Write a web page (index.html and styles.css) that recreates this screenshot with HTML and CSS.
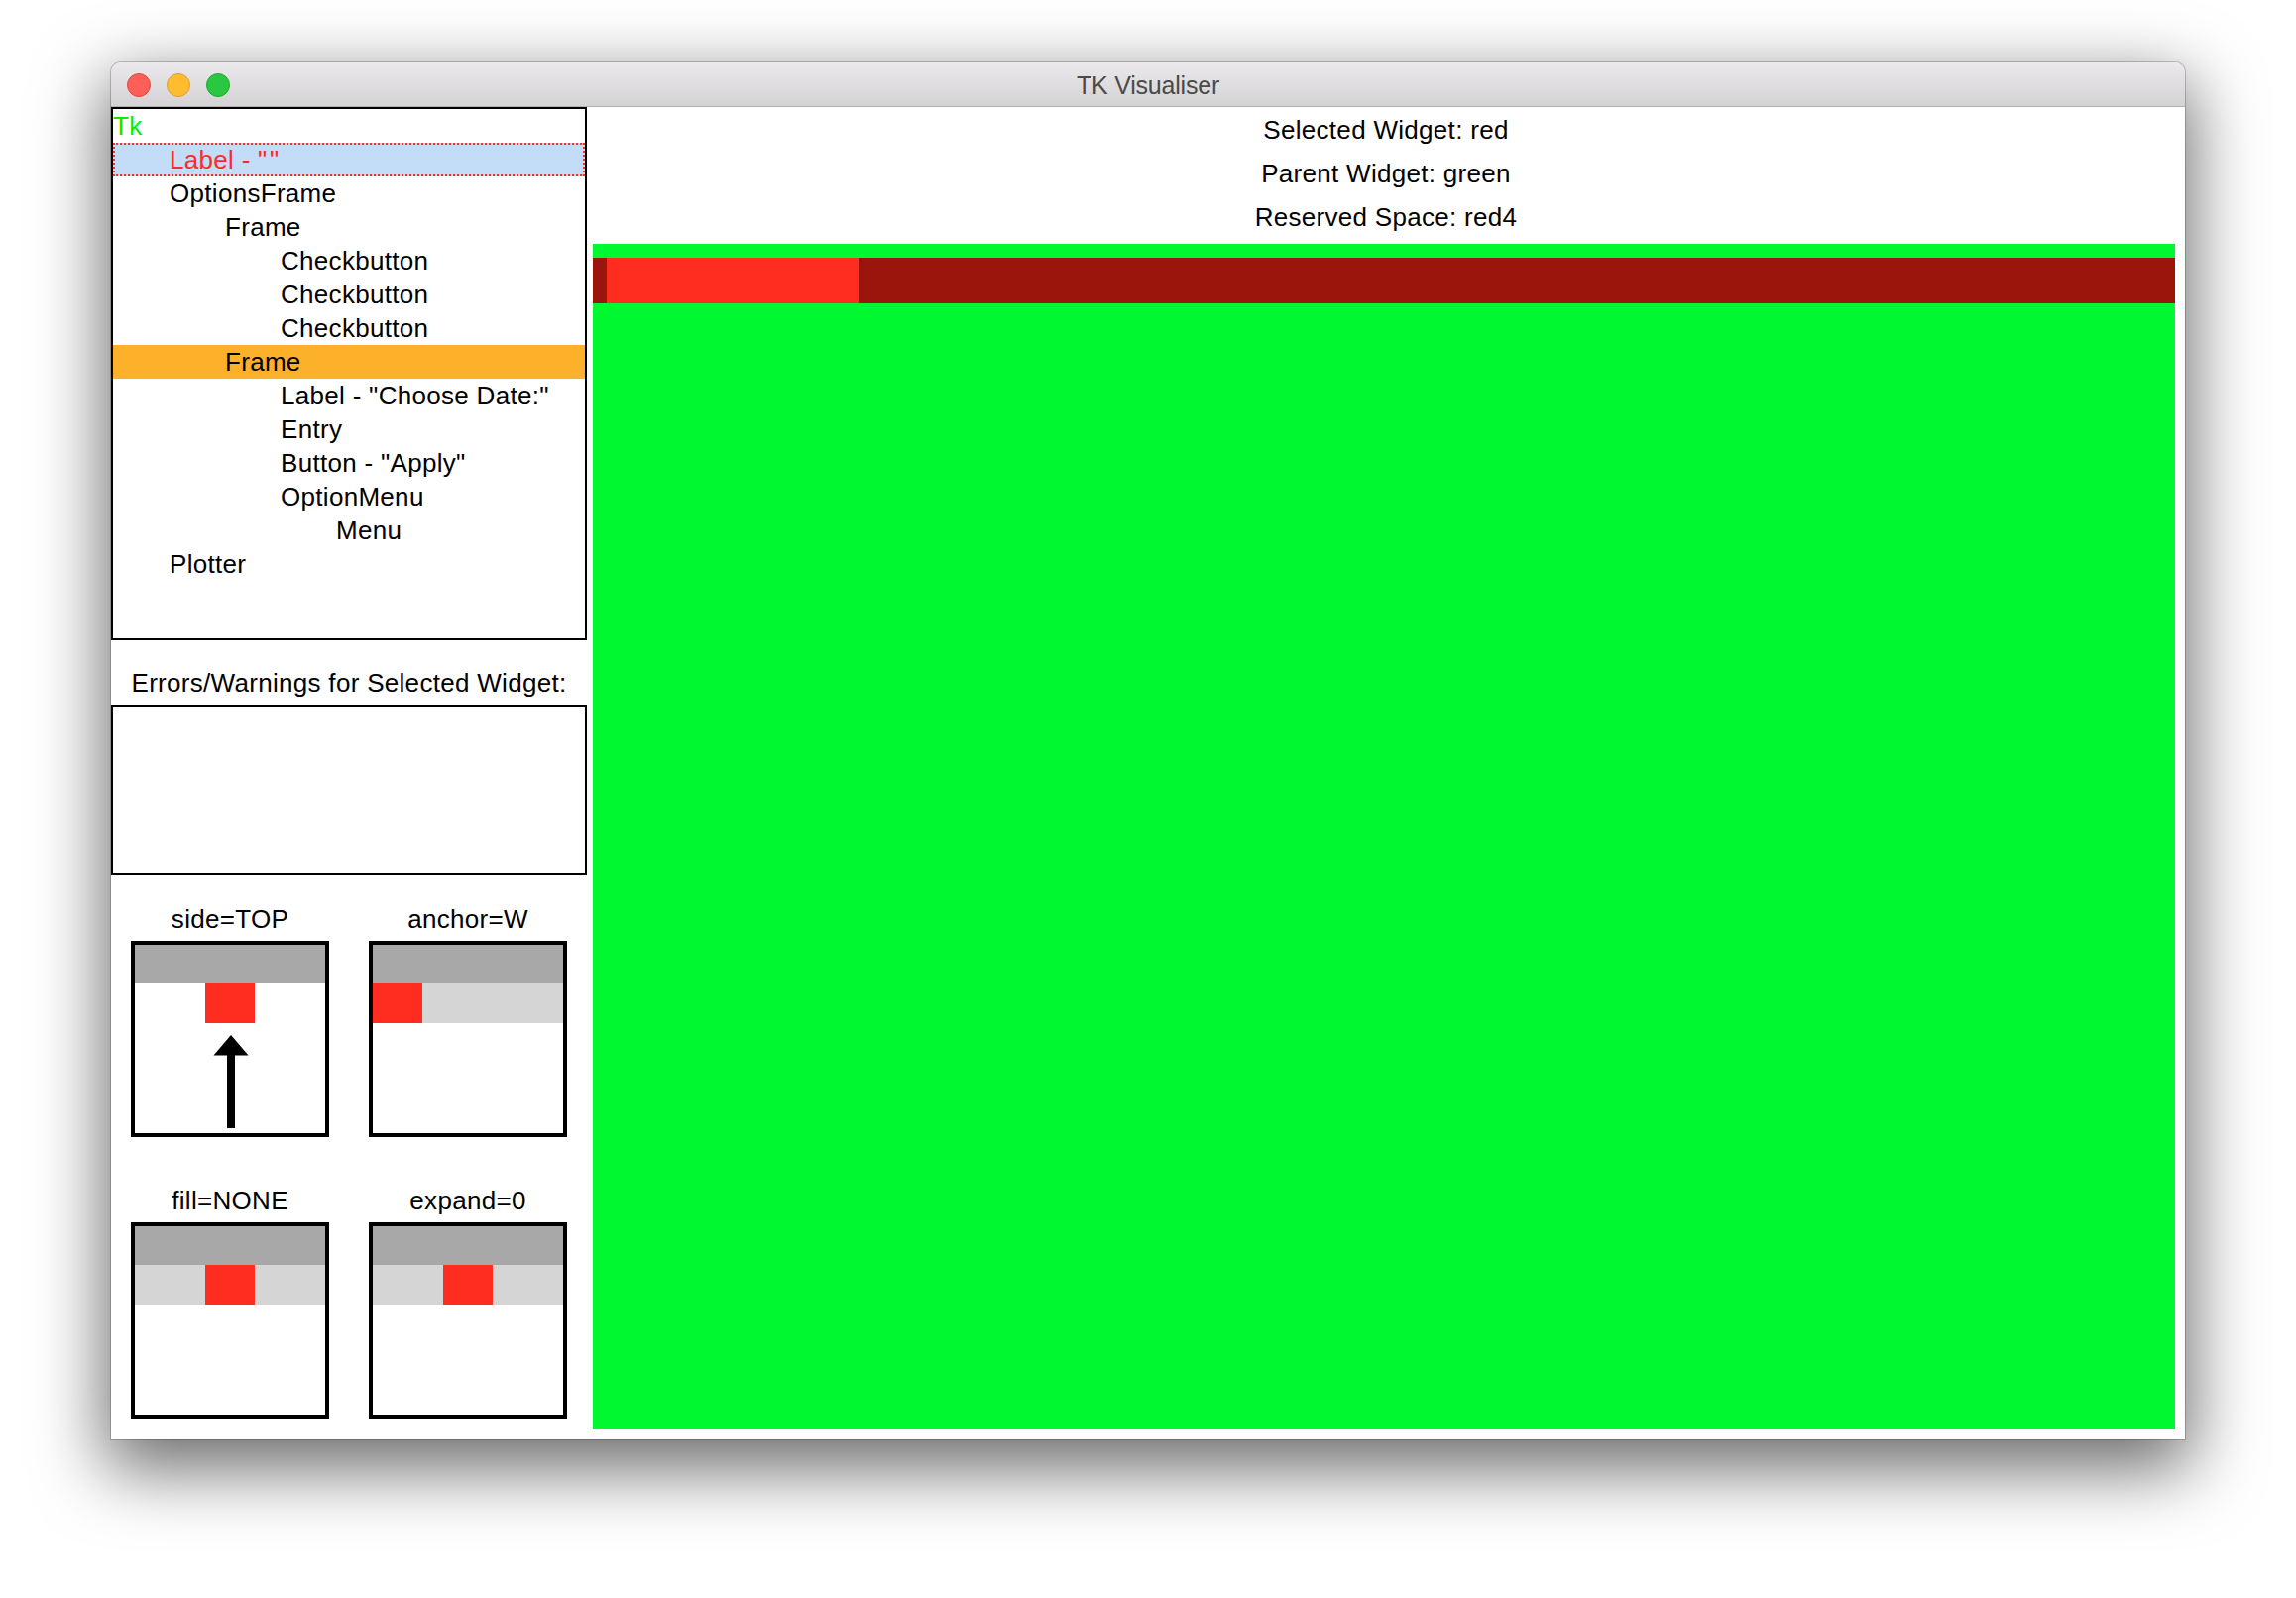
FILE: index.html
```html
<!DOCTYPE html>
<html>
<head>
<meta charset="utf-8">
<title>TK Visualiser</title>
<link rel="stylesheet" href="styles.css">
</head>
<body>
<div class="window">
  <div class="titlebar">
    <div class="lights">
      <span class="light close"></span>
      <span class="light min"></span>
      <span class="light max"></span>
    </div>
    <div class="title">TK Visualiser</div>
    <div></div>
  </div>
  <div class="content">
    <div class="left">
      <div class="tree">
        <div class="row lv0 root">Tk</div>
        <div class="row lv1 selected">Label - "&#8202;"</div>
        <div class="row lv1">OptionsFrame</div>
        <div class="row lv2">Frame</div>
        <div class="row lv3">Checkbutton</div>
        <div class="row lv3">Checkbutton</div>
        <div class="row lv3">Checkbutton</div>
        <div class="row lv2 hover">Frame</div>
        <div class="row lv3">Label - "Choose Date:"</div>
        <div class="row lv3">Entry</div>
        <div class="row lv3">Button - "Apply"</div>
        <div class="row lv3">OptionMenu</div>
        <div class="row lv4">Menu</div>
        <div class="row lv1">Plotter</div>
      </div>
      <div class="errors-label">Errors/Warnings for Selected Widget:</div>
      <div class="errors-box"></div>
      <div class="diagrams">
        <div class="cell">
          <div class="cap">side=TOP</div>
          <div class="diag">
            <div class="band-dark"></div>
            <div class="band center"><span class="blk"></span></div>
            <svg class="arrow" width="36" height="94" viewBox="0 0 36 94">
              <polygon points="18,0 35.5,20.5 0.5,20.5" fill="#000"/>
              <rect x="14" y="20" width="8" height="74" fill="#000"/>
            </svg>
          </div>
        </div>
        <div class="cell">
          <div class="cap">anchor=W</div>
          <div class="diag">
            <div class="band-dark"></div>
            <div class="band filled"><span class="blk"></span></div>
          </div>
        </div>
        <div class="cell">
          <div class="cap">fill=NONE</div>
          <div class="diag">
            <div class="band-dark"></div>
            <div class="band filled center"><span class="blk"></span></div>
          </div>
        </div>
        <div class="cell">
          <div class="cap">expand=0</div>
          <div class="diag">
            <div class="band-dark"></div>
            <div class="band filled center"><span class="blk"></span></div>
          </div>
        </div>
      </div>
    </div>
    <div class="right">
      <div class="legend">
        <div class="legend-line">Selected Widget: red</div>
        <div class="legend-line">Parent Widget: green</div>
        <div class="legend-line">Reserved Space: red4</div>
      </div>
      <div class="canvas">
        <div class="reserved"><div class="widget"></div></div>
      </div>
    </div>
  </div>
</div>
</body>
</html>
```

FILE: styles.css
```css
html, body {
  margin: 0;
  padding: 0;
  background: #ffffff;
}

body {
  width: 2316px;
  height: 1612px;
  overflow: hidden;
  padding: 63px 0 0 112px;
  box-sizing: border-box;
  font-family: "Liberation Sans", Arial, Helvetica, sans-serif;
}

.window {
  width: 2092px;
  height: 1389px;
  background: #ffffff;
  border-radius: 10px 10px 0 0;
  box-shadow: 0 0 0 1px rgba(0, 0, 0, 0.2), 0 24px 70px 6px rgba(0, 0, 0, 0.58);
  display: flex;
  flex-direction: column;
  overflow: hidden;
}

.titlebar {
  height: 44px;
  flex: none;
  border-bottom: 1px solid #b1b0b1;
  background: linear-gradient(#ebe9eb, #d4d2d4);
  display: grid;
  grid-template-columns: 1fr auto 1fr;
  align-items: center;
  border-radius: 10px 10px 0 0;
}

.lights {
  display: flex;
  gap: 16px;
  padding-left: 16px;
  padding-top: 1px;
}

.light {
  width: 24px;
  height: 24px;
  border-radius: 50%;
  box-sizing: border-box;
}

.light.close { background: #fe5f57; border: 1px solid #e1463f; }
.light.min { background: #febc2e; border: 1px solid #dfa024; }
.light.max { background: #29c840; border: 1px solid #1cab2c; }

.title {
  font-size: 25px;
  color: #4a4a4a;
  letter-spacing: -0.2px;
  padding-top: 2px;
}

.content {
  flex: 1;
  display: flex;
}

.left {
  width: 480px;
  flex: none;
  display: flex;
  flex-direction: column;
}

.tree {
  height: 538px;
  border: 2px solid #000;
  box-sizing: border-box;
}

.row {
  height: 34px;
  line-height: 34px;
  font-size: 26px;
  letter-spacing: 0.3px;
  color: #000;
  white-space: nowrap;
  box-sizing: border-box;
}

.lv0 { padding-left: 0; }
.lv1 { padding-left: 57px; }
.lv2 { padding-left: 113px; }
.lv3 { padding-left: 169px; }
.lv4 { padding-left: 225px; }

.root { color: #00f000; }

.selected {
  background: #c3ddf8;
  color: #ff2b2b;
  border: 2px dotted #ff2b2b;
  line-height: 30px;
  padding-left: 55px;
}

.hover { background: #fdb02a; }

.errors-label {
  padding: 26px 0 5px;
  line-height: 34px;
  font-size: 26px;
  letter-spacing: 0.3px;
  text-align: center;
  color: #000;
}

.errors-box {
  height: 172px;
  border: 2px solid #000;
  box-sizing: border-box;
}

.diagrams {
  display: grid;
  grid-template-columns: 200px 200px;
  column-gap: 40px;
  row-gap: 47px;
  padding: 27px 20px 0;
}

.cap {
  line-height: 34px;
  font-size: 26px;
  letter-spacing: 0.3px;
  text-align: center;
  margin-bottom: 5px;
  color: #000;
}

.diag {
  width: 200px;
  height: 198px;
  border: 4px solid #000;
  box-sizing: border-box;
  display: flex;
  flex-direction: column;
}

.band-dark {
  height: 39px;
  background: #a8a8a8;
}

.band {
  height: 40px;
  display: flex;
}

.band.filled { background: #d5d5d5; }
.band.center { justify-content: center; }

.blk {
  width: 50px;
  height: 40px;
  background: #ff2c1f;
}

.arrow {
  display: block;
  margin: 12px auto 0;
  position: relative;
  left: 1px;
}

.right {
  flex: 1;
  display: flex;
  flex-direction: column;
}

.legend {
  padding-top: 1px;
  margin-bottom: 5px;
}

.legend-line {
  height: 44px;
  line-height: 44px;
  font-size: 26px;
  letter-spacing: 0.3px;
  text-align: center;
  color: #000;
}

.canvas {
  flex: 1;
  margin: 0 10px 10px 6px;
  background: #00f830;
  padding-top: 14px;
}

.reserved {
  height: 46px;
  background: #9c150d;
}

.widget {
  margin-left: 14px;
  width: 254px;
  height: 46px;
  background: #ff2c1f;
}
```
